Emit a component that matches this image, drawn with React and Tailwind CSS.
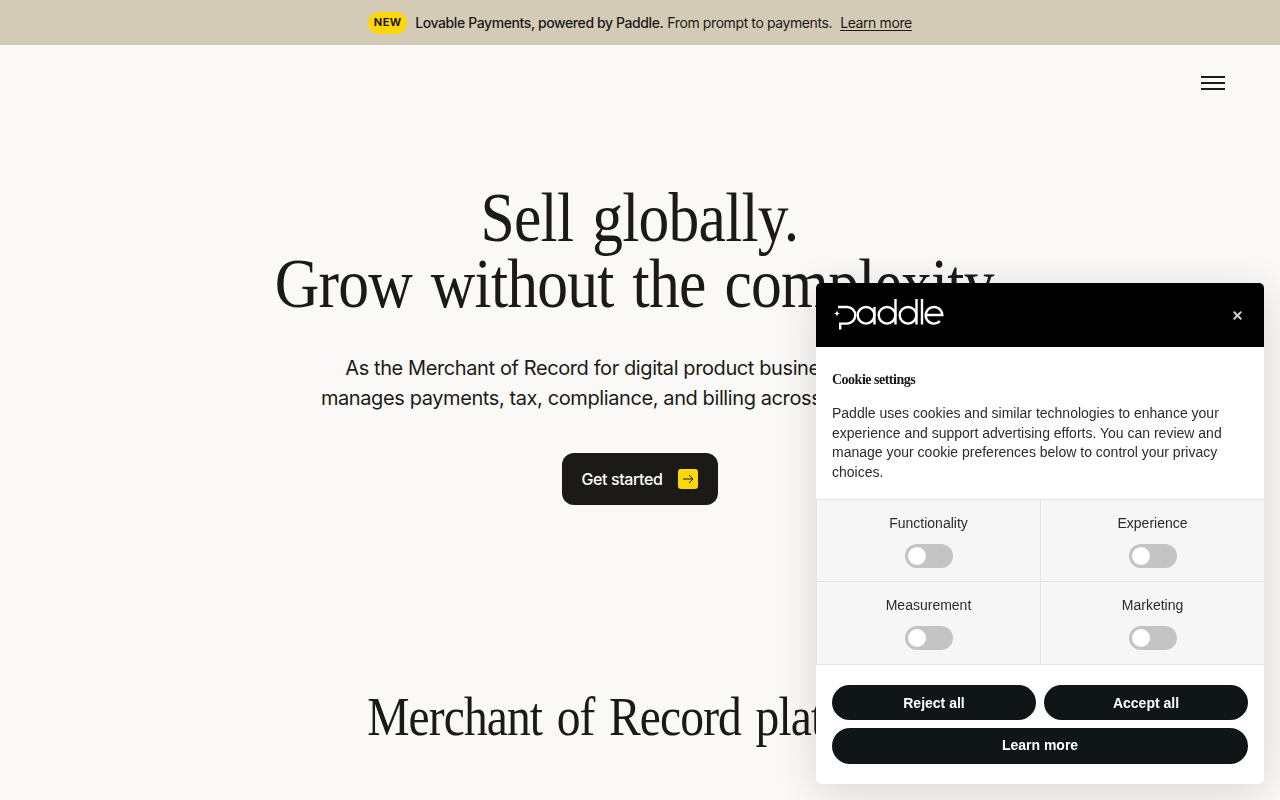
import React from 'react';
import { X } from 'lucide-react';

const serif = "font-['Liberation_Serif',serif]";

const PaddleLogo = () => (
  <svg width="120" height="44" viewBox="0 0 120 44" fill="none" stroke="white" strokeWidth="2.4">
    <path d="M10 14 H19 A8.3 8.3 0 0 1 19 30.6 H12.2 M12.2 29.5 V36.5" />
    <path d="M9 17 C9.3 19.6 9.9 20.2 12.5 20.5 C9.9 20.8 9.3 21.4 9 24 C8.7 21.4 8.1 20.8 5.5 20.5 C8.1 20.2 8.7 19.6 9 17 Z" fill="white" stroke="none" />
    <circle cx="38" cy="22.3" r="8.3" />
    <path d="M46.5 14 V31.5" />
    <circle cx="59" cy="22.3" r="8.3" />
    <path d="M67.5 6 V31.5" />
    <circle cx="80" cy="22.3" r="8.3" />
    <path d="M88.5 6 V31.5" />
    <path d="M94 6 V31.5" />
    <path d="M98 22 H114.3 A8.3 8.3 0 1 0 111.9 28.2" />
  </svg>
);

const Toggle = () => (
  <div className="w-12 h-6 rounded-full bg-[#c4c4c4] p-[3px] mx-auto">
    <div className="w-[18px] h-[18px] rounded-full bg-white" />
  </div>
);

const Preference = ({ label, className }) => (
  <div className={`flex flex-col items-center pt-[14px] h-[82px] border-l border-[#e4e4e4] ${className}`}>
    <span className="text-sm leading-[19px] text-[#2b2b2b]">{label}</span>
    <div className="mt-[11px]"><Toggle /></div>
  </div>
);

const CookieButton = ({ children, className }) => (
  <button className={`rounded-full bg-[#101617] text-white text-sm font-bold ${className}`}>{children}</button>
);

const CookieModal = () => (
  <div className="fixed left-[816px] top-[283px] w-[448px] rounded-[5px] bg-white overflow-hidden shadow-[0_8px_40px_rgba(0,0,0,0.14)] font-['Liberation_Sans',sans-serif] tracking-normal">
    <div className="h-16 bg-black flex items-center justify-between pl-3 pr-[20px]">
      <PaddleLogo />
      <X size={13} strokeWidth={3.6} className="text-[#d0d0d0]" />
    </div>
    <div className="px-4 pt-[23px] pb-[17px]">
      <h2 className={`${serif} text-sm font-bold tracking-[-0.5px] leading-[19px] text-[#1a1a1a]`}>Cookie settings</h2>
      <p className="mt-[15px] text-sm leading-[19.6px] text-[#2b2b2b]">
        Paddle uses cookies and similar technologies to enhance your experience and support advertising efforts. You can review and manage your cookie preferences below to control your privacy choices.
      </p>
    </div>
    <div className="grid grid-cols-2 bg-[#f6f6f6] border-y border-[#e4e4e4]">
      <Preference label="Functionality" className="border-b" />
      <Preference label="Experience" className="border-b" />
      <Preference label="Measurement" />
      <Preference label="Marketing" />
    </div>
    <div className="px-4 pt-5 pb-5 grid grid-cols-2 gap-2">
      <CookieButton className="h-[35px]">Reject all</CookieButton>
      <CookieButton className="h-[35px]">Accept all</CookieButton>
      <CookieButton className="h-9 col-span-2 pb-0.5">Learn more</CookieButton>
    </div>
  </div>
);

export default function App() {
  return (
    <div className="h-screen overflow-hidden bg-[#faf9f7] text-[#1c1a17] font-['Inter',sans-serif] tracking-[-0.025em]">
      <div className="h-[45px] bg-[#d4cbb7] flex items-center justify-center text-sm">
        <span className="bg-[#ffd60a] rounded-full w-[39px] h-[22px] flex items-center justify-center text-[11px] font-bold tracking-[0.4px] mr-2">NEW</span>
        <span className="font-[450]">Lovable Payments, powered by Paddle.</span>
        <span className="ml-1">From prompt to payments.</span>
        <a className="ml-2 underline underline-offset-2">Learn more</a>
      </div>

      <header className="flex justify-end pt-[31px] pr-[55px]">
        <div className="w-6 flex flex-col gap-[4px]">
          <div className="h-0.5 bg-[#1c1a17]" />
          <div className="h-0.5 bg-[#1c1a17]" />
          <div className="h-0.5 bg-[#1c1a17]" />
        </div>
      </header>

      <main className="flex flex-col items-center text-center">
        <h1 className={`${serif} mt-[95px] text-[70px] leading-[66px] tracking-[-0.9px] [word-spacing:5px] scale-x-[0.88] font-normal whitespace-nowrap`}>
          Sell globally.<br />Grow without the complexity.
        </h1>
        <p className="mt-[36px] text-xl leading-[30px]">
          As the Merchant of Record for digital product businesses, Paddle<br />
          manages payments, tax, compliance, and billing across 200+ markets.
        </p>
        <button className="mt-[40px] h-[52px] w-[156px] rounded-xl bg-[#1c1a17] text-white flex items-center justify-center gap-4 font-medium">
          Get started
          <span className="w-5 h-5 rounded-[3px] bg-[#ffd60a] flex items-center justify-center">
            <svg width="12" height="12" viewBox="0 0 12 12" fill="none" stroke="#1c1a17" strokeWidth="1">
              <path d="M1 6 H11 M7 2 L11 6 L7 10" />
            </svg>
          </span>
        </button>
        <h2 className={`${serif} mt-[182px] text-[54px] leading-[60px] tracking-[-1px] [word-spacing:4px] scale-x-[0.88] font-normal whitespace-nowrap`}>Merchant of Record platform</h2>
      </main>

      <CookieModal />
    </div>
  );
}
